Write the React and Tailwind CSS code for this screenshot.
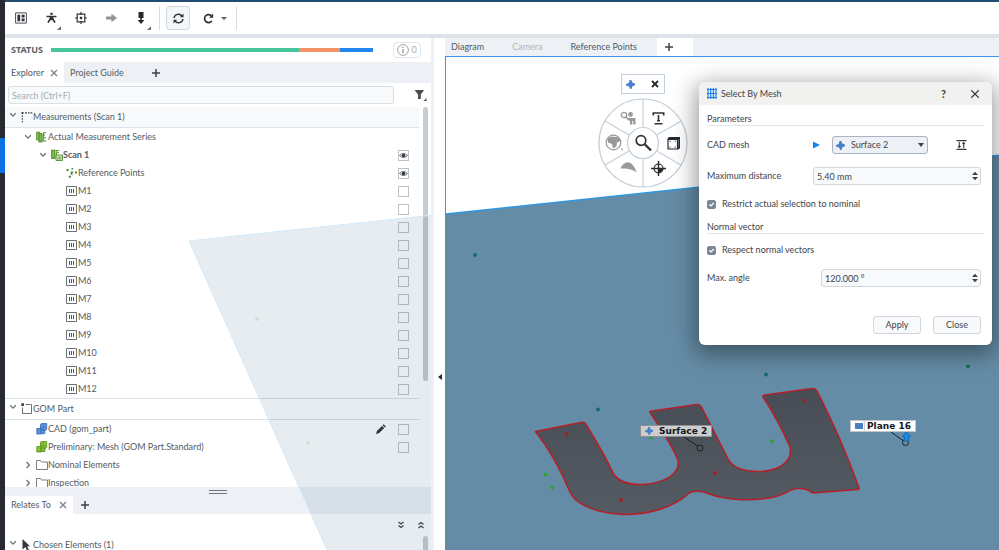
import React, { useState } from "react";

const measurements = [
  "M1", "M2", "M3", "M4", "M5", "M6",
  "M7", "M8", "M9", "M10", "M11", "M12",
];

const indents = ["pl-1", "pl-[19px]", "pl-[34px]", "pl-[49px]"];

/* ---------- small icons ---------- */

const Chevron = ({ open }) => (
  <svg width="8" height="8" viewBox="0 0 8 8" fill="none" stroke="#6b737b" strokeWidth="1.3">
    {open ? <path d="M1.2 2.3 4 5.1 6.8 2.3" /> : <path d="M2.6 1 5.4 4 2.6 7" />}
  </svg>
);

const CloseIcon = ({ size = 8, color = "#7b858e", weight = 1.4 }) => (
  <svg width={size} height={size} viewBox="0 0 8 8" fill="none" stroke={color} strokeWidth={weight}>
    <path d="M1 1l6 6M7 1L1 7" />
  </svg>
);

const PlusIcon = () => (
  <svg width="8" height="8" viewBox="0 0 8 8" stroke="#3c4146" strokeWidth="1.5">
    <path d="M4 0v8M0 4h8" />
  </svg>
);

const SurfaceIcon = ({ size = 9 }) => (
  <svg width={size} height={size} viewBox="0 0 10 10">
    <path d="M4 0h2l.8 2.6L10 4.2v1.6L7.2 7 6 10H4.6L3.4 7.2 0 6V4.4l3-1z" fill="#4a7fcb" />
    <path d="M3.4 3.2h3.2v3.4H3.4z" fill="#4a7fcb" />
  </svg>
);

const Cubes = ({ fill, dark }) => (
  <svg width="12" height="12" viewBox="0 0 12 12" fill={fill} stroke={dark} strokeWidth=".8">
    <path d="M4.5 1.2 5.7.5h5v6L9.5 7.4h-5z" />
    <path d="M.8 5.5h4.4V11H.8z" />
    <path d="M5.2 7h3.6v3.6H5.2z" />
    <path d="M4.8 4.5h5M7.5 1.2v5.6" opacity=".5" />
  </svg>
);

const icons = {
  measurements: (
    <svg width="12" height="12" viewBox="0 0 12 12" fill="#3c4146">
      <path d="M.5 1h2v2h-2zM4 1.2h2v1.2H4zM7 1.2h1.6v1.2H7zM9.6 1.2h1.6v1.2H9.6zM.8 4.4H2V6H.8zM.8 7.2H2v1.6H.8zM.8 10H2v1.2H.8z" />
    </svg>
  ),
  series: (
    <svg width="12" height="12" viewBox="0 0 12 12">
      <path d="M.5 1h3v8h-3z" fill="#8cc152" stroke="#4c8a2b" strokeWidth=".7" />
      <path d="M2.8 2.5h3.4V11H2.8z" fill="#79b83b" stroke="#3f7a24" strokeWidth=".7" />
      <path d="M7.4 1.7H10M7.4 4.2h1.8M7.4 6.8H10M7.4 10h3M7.6 1.5v9" stroke="#4c8a2b" strokeWidth=".9" />
    </svg>
  ),
  scan: (
    <svg width="12" height="12" viewBox="0 0 12 12">
      <path d="M.5 1h3.6v8.5H.5z" fill="#79b83b" stroke="#3f7a24" strokeWidth=".7" />
      <path d="M5.6 1.5h2.6M5.6 3.7H8M5.6 1v5" stroke="#4c8a2b" strokeWidth=".9" />
      <path d="M5 6h6.5v5.5H5z" fill="#d8e6cb" stroke="#4c8a2b" strokeWidth=".9" />
      <path d="M7 7.5v3M8.4 7.5v3M9.8 7.5v3" stroke="#4c8a2b" strokeWidth=".7" />
    </svg>
  ),
  points: (
    <svg width="12" height="12" viewBox="0 0 12 12" fill="#3f8a33">
      <path d="M.5 2h2v2h-2zM5.5 1h1.6v1.6H5.5zM9 4.6h2v2H9zM2.8 8.8h2v2h-2zM4.8 4.6h2.6v1H6.6v2.2H4.8z" />
    </svg>
  ),
  frame: (
    <svg width="11" height="12" viewBox="0 0 11 12" fill="none" stroke="#6b7177">
      <path d="M.5 1.5h10v9H.5z" />
      <path d="M3.5 4v4M5.5 4v4M7.5 4v4" stroke="#50565c" />
    </svg>
  ),
  part: (
    <svg width="12" height="12" viewBox="0 0 12 12" fill="none" stroke="#6b7177">
      <path d="M4.5 1.5h6v9h-9v-6" />
      <path d="M.3.3h2.6v2.6H.3z" fill="#2e3338" stroke="none" />
    </svg>
  ),
  cad: <Cubes fill="#5a93dc" dark="#3568b3" />,
  mesh: <Cubes fill="#86c232" dark="#4f8a1b" />,
  folder: (
    <svg width="12" height="12" viewBox="0 0 12 12" fill="none" stroke="#7a8086">
      <path d="M.5 1.5h4l1 1.5h6v7.5H.5z" />
    </svg>
  ),
  cursor: (
    <svg width="12" height="12" viewBox="0 0 12 12" fill="#34383c">
      <path d="M1.5 0l7.5 7.2H6.2l1.7 3.7-1.8.8-1.6-3.6-3 2.4z" />
    </svg>
  ),
};

/* ---------- toolbar ---------- */

const ToolButton = ({ label, corner, active, className = "", children }) => (
  <button
    aria-label={label}
    className={`relative flex h-6 w-6 items-center justify-center rounded-sm ${
      active ? "border border-[#cfd6de] bg-[#f3f6f9]" : ""
    } ${className}`}
  >
    {children}
    {corner && (
      <svg className="absolute right-0.5 bottom-0" width="4" height="4" viewBox="0 0 4 4">
        <path d="M4 0v4H0z" fill="#6b7177" />
      </svg>
    )}
  </button>
);

const Toolbar = () => (
  <header className="flex h-[38px] shrink-0 items-center border-t-2 border-b-4 border-t-[#1f4c70] border-b-[#dde3e9] bg-white pl-1">
    <ToolButton label="Layout">
      <svg width="12" height="12" viewBox="0 0 12 12">
        <path d="M.6.9h10.8v10.2H.6z" fill="none" stroke="#4a4f54" />
        <path d="M2.4 2.8h2.8v6.4H2.4zM6.6 2.8h3v2.6h-3zM6.6 6.6h3v2.6h-3z" fill="#303439" />
      </svg>
    </ToolButton>
    <ToolButton label="Alignment" corner className="ml-1.5">
      <svg width="11" height="12" viewBox="0 0 11 12" fill="none" stroke="#303439" strokeWidth="1.7">
        <path d="M.5 4.5h10M5.5 4.5 2 10.6M5.5 4.5 9 10.6M3 7.5h5" />
        <path d="M5.5.8v2" strokeWidth="2.4" />
      </svg>
    </ToolButton>
    <ToolButton label="Center view" className="ml-1.5">
      <svg width="12" height="12" viewBox="0 0 12 12" fill="none" stroke="#303439" strokeWidth="1.2">
        <path d="M2.2 2.2h7.6v7.6H2.2z" />
        <path d="M6 0v3M6 9v3M0 6h3M9 6h3" />
        <path d="M4.8 4.8h2.4v2.4H4.8z" fill="#303439" stroke="none" />
      </svg>
    </ToolButton>
    <ToolButton label="Next" className="ml-1.5">
      <svg width="11" height="10" viewBox="0 0 11 10" fill="#909498">
        <path d="M0 3.6h5.4V.8L11 5 5.4 9.2V6.4H0z" />
      </svg>
    </ToolButton>
    <ToolButton label="Probe" corner className="ml-1.5">
      <svg width="8" height="12" viewBox="0 0 8 12" fill="#26292d">
        <path d="M1.5 0h5v6h-5zM3.2 6h1.6v2h2.6L4 12 .6 8h2.6z" />
      </svg>
    </ToolButton>
    <span className="ml-1.5 h-6 w-px bg-[#d5dbe1]" />
    <ToolButton label="Recalculate" active className="ml-1.5">
      <svg width="11" height="11" viewBox="0 0 11 11" fill="none" stroke="#303439" strokeWidth="1.5">
        <path d="M1 5A4.4 4.4 0 0 1 9 3.2M10 6a4.4 4.4 0 0 1-8 1.8" />
        <path d="M10.5.4v3.8H6.8zM.5 10.6V6.8h3.7z" fill="#303439" stroke="none" />
      </svg>
    </ToolButton>
    <ToolButton label="Redo" className="ml-1.5">
      <svg width="11" height="11" viewBox="0 0 11 11" fill="none" stroke="#303439" strokeWidth="1.7">
        <path d="M8.8 8A4 4 0 1 1 8.2 2.6" />
        <path d="M10.2.6v4.2H6z" fill="#303439" stroke="none" />
      </svg>
    </ToolButton>
    <button aria-label="Redo options" className="flex h-6 w-2 items-center justify-center">
      <svg width="6" height="3" viewBox="0 0 6 3">
        <path d="M0 0h6L3 3z" fill="#565c62" />
      </svg>
    </button>
    <span className="ml-2 h-6 w-px bg-[#d5dbe1]" />
  </header>
);

/* ---------- explorer ---------- */

const VisibilityBox = ({ name, visible }) => {
  const [on, setOn] = useState(Boolean(visible));
  return (
    <label className="relative flex h-[11px] w-[11px]">
      <input
        type="checkbox"
        aria-label={`Show ${name}`}
        checked={on}
        onChange={() => setOn(!on)}
        className="h-[11px] w-[11px] appearance-none border border-[#bcc3c9] bg-transparent"
      />
      {on && (
        <svg className="absolute left-0 top-0" width="11" height="11" viewBox="0 0 11 11">
          <path d="M1.5 5.5Q5.5 1.5 9.5 5.5Q5.5 9.5 1.5 5.5z" fill="none" stroke="#50555a" strokeWidth=".9" />
          <circle cx="5.5" cy="5.5" r="1.7" fill="#303439" />
        </svg>
      )}
    </label>
  );
};

const TreeRow = ({ level, icon, name, open, bold, edit, box, visible }) => (
  <li className={`flex h-[18px] items-center pr-2.5 ${indents[level]}`}>
    <span className="mr-1 w-2">{open !== undefined && <Chevron open={open} />}</span>
    <span className="w-3">{icons[icon]}</span>
    <span className={`flex-1 whitespace-nowrap ${bold ? "font-bold" : ""}`}>{name}</span>
    {edit && (
      <svg className="mr-3" width="10" height="10" viewBox="0 0 10 10" fill="#303439">
        <path d="M7.6.3 9.8 2.4 8.8 3.5 6.6 1.3zM6 1.9l2.2 2.2-5 5L0 10l.9-3z" />
      </svg>
    )}
    {box && <VisibilityBox name={name} visible={visible} />}
  </li>
);

const TreeHeading = ({ icon, name, className }) => (
  <h2 className={`flex items-center border-b border-[#dbe2e9] pl-1 ${className}`}>
    <span className="mr-1 w-2 pb-1"><Chevron open /></span>
    <span className="w-3">{icons[icon]}</span>
    {name}
  </h2>
);

const StatusBar = () => (
  <div className="flex h-6 shrink-0 items-center bg-white pr-2.5 pl-1.5">
    <span className="w-10 font-['Noto_Sans',sans-serif] text-[9px] font-bold text-[#5a6168]">STATUS</span>
    <div className="mr-5 flex h-1 flex-1">
      <span className="flex-60 bg-[#48c79c]" />
      <span className="flex-10 bg-[#f39367]" />
      <span className="flex-8 bg-[#2385ee]" />
    </div>
    <button className="flex h-4 w-7 items-center justify-center gap-0.5 rounded-sm border border-[#e3e6e9] text-[#a9adb1]">
      <svg width="12" height="12" viewBox="0 0 12 12" fill="none" stroke="#85898d">
        <circle cx="6" cy="6" r="5.4" strokeWidth=".8" />
        <path d="M6 5v4M6 2.8v1.2" strokeWidth="1.2" />
      </svg>
      0
    </button>
  </div>
);

const Explorer = () => (
  <aside className="relative flex w-[429px] shrink-0 flex-col overflow-hidden border-r-3 border-[#edf1f5] bg-white">
    <StatusBar />
    <nav className="flex h-[21px] shrink-0 items-center bg-[#edf1f5]">
      <button className="flex h-full items-center gap-1.5 bg-white pr-1.5 pl-1.5">
        Explorer <CloseIcon />
      </button>
      <button className="h-full pl-1.5">Project Guide</button>
      <button aria-label="Add tab" className="ml-7"><PlusIcon /></button>
    </nav>

    <div className="flex h-6 shrink-0 items-center pr-1 pl-[3px]">
      <input
        type="search"
        aria-label="Search"
        placeholder="Search (Ctrl+F)"
        className="h-[18px] flex-1 rounded-[3px] border border-[#d9dfe5] bg-[#f7f9fb] px-[3px] outline-none placeholder:text-[#a7adb3]"
      />
      <button aria-label="Filter" className="ml-5">
        <svg width="13" height="12" viewBox="0 0 13 12" fill="#4a4f54">
          <path d="M.5 1h9.6L6.8 5.4V10H4V5.4zM12.5 9v3h-3z" />
        </svg>
      </button>
    </div>

    <div className="flex min-h-0 flex-1 overflow-hidden">
      <div className="min-w-0 flex-1">
        <TreeHeading icon="measurements" name="Measurements (Scan 1)" className="h-[21px] bg-[#f7f9fb]" />
        <ul>
          <TreeRow level={1} icon="series" name="Actual Measurement Series" open />
          <TreeRow level={2} icon="scan" name="Scan 1" open bold box visible />
          <TreeRow level={3} icon="points" name="Reference Points" box visible />
          {measurements.map((m) => (
            <TreeRow key={m} level={3} icon="frame" name={m} box />
          ))}
        </ul>
        <TreeHeading icon="part" name="GOM Part" className="h-[22px] border-t" />
        <ul>
          <TreeRow level={1} icon="cad" name="CAD (gom_part)" edit box />
          <TreeRow level={1} icon="mesh" name="Preliminary: Mesh (GOM Part.Standard)" box />
          <TreeRow level={1} icon="folder" name="Nominal Elements" open={false} />
          <TreeRow level={1} icon="folder" name="Inspection" open={false} />
        </ul>
      </div>
      <div className="w-3 pl-1">
        <div className="h-[72%] w-[5px] rounded-full bg-[#c6ccd3]" />
      </div>
    </div>

    <div className="h-[63px] shrink-0 overflow-hidden">
      <div className="flex h-[9px] items-center justify-center bg-[#edf1f5]">
        <span className="h-1 w-[18px] border-y border-[#6f767d]" />
      </div>
      <nav className="flex h-[18px] items-center bg-[#edf1f5]">
        <button className="flex h-full items-center gap-2 bg-white pr-1.5 pl-1.5">
          Relates To <CloseIcon />
        </button>
        <button aria-label="Add panel" className="ml-2"><PlusIcon /></button>
      </nav>
      <div className="flex">
        <div className="flex-1">
          <div className="flex h-[22px] items-center justify-end gap-3">
            <button aria-label="Expand all">
              <svg width="8" height="8" viewBox="0 0 8 8" fill="none" stroke="#3c4146" strokeWidth="1.2">
                <path d="M1.5 1 4 3l2.5-2M1.5 4.5l2.5 2 2.5-2" />
              </svg>
            </button>
            <button aria-label="Collapse all" className="-mr-1.5">
              <svg width="8" height="8" viewBox="0 0 8 8" fill="none" stroke="#3c4146" strokeWidth="1.2">
                <path d="M1.5 3.5 4 1.5l2.5 2M1.5 7 4 5l2.5 2" />
              </svg>
            </button>
          </div>
          <TreeHeading icon="cursor" name="Chosen Elements (1)" className="h-[18px]" />
        </div>
        <div className="w-3 pt-[22px] pl-1">
          <div className="h-10 w-[5px] rounded-full bg-[#c6ccd3]" />
        </div>
      </div>
    </div>

    {/* Faded continuation of the scene plane behind the panel */}
    <svg
      className="pointer-events-none absolute inset-0 -mr-[3px] h-full w-[429px]"
      viewBox="5 38 429 512"
      preserveAspectRatio="xMinYMin slice"
    >
      <path d="M189 241 434 215V550H327z" fill="#195478" fillOpacity=".11" />
      <path d="M434 215 189 241 327 550" fill="none" stroke="#d3eafa" strokeWidth="1" />
      <circle cx="257" cy="319" r="2" fill="#d3e0e0" />
      <circle cx="308" cy="443" r="2" fill="#d3e0e0" />
    </svg>
  </aside>
);

/* ---------- 3D view ---------- */

const dots = [
  [475, 255, "#1d6b68"], [598, 409.5, "#1d6b68"], [766, 374.5, "#1d6b68"], [968, 366.5, "#1d6b58"],
  [545.5, 474.5, "#2da336"], [552.5, 487.5, "#2da336"], [772, 441.5, "#2da336"], [651, 437.5, "#2da336"],
  [566.5, 434, "#a02025"], [621, 500, "#a02025"], [715, 473, "#a02025"], [804.5, 400.5, "#a02025"],
];

const letterOutline = [
  "M535.5 431.5L582 422.3Q585 421.8 587 426",
  "C598 444 607 460 613 473C618 482 629 484.5 641 484.5",
  "C663 484 681 474 678 460C673 448 662 430 650 412.5",
  "Q649 411 652 411L697 404.5Q700 404 702 408",
  "L727 457C731 467 743 471.5 759 471.5C780 471 793 461 790 447",
  "C783 431 773 412 763 397Q762 395.5 765 395",
  "L812 388.5Q815 388 817 391C834 424 848 457 859 488",
  "Q859 489.5 857 489.5L813 493C808 490 806 488.5 798 488.5",
  "C790 488.5 787 494 776 496.5C757 501.5 727 501 708 493.5",
  "C701 490.5 692 490.5 688 494C672 509 645 514.5 624 514.5",
  "C596 513.5 575 504 570 492C560 468 547 446 535.5 431.5z",
].join("");

const Scene = () => (
  <svg className="block h-full w-full" viewBox="446 57 553 493" preserveAspectRatio="xMinYMin slice">
    <defs>
      <linearGradient id="mesh" x1="0" y1="0" x2="0" y2="1">
        <stop offset="0" stopColor="#484d55" />
        <stop offset="1" stopColor="#555b63" />
      </linearGradient>
    </defs>
    <path d="M446 214 1999 49V1550H446z" fill="#658ca6" />
    <path d="M446 214 1999 49" stroke="#2f97e0" strokeWidth="1.5" />
    <path d={letterOutline} fill="url(#mesh)" stroke="#b3202a" strokeWidth="1.6" strokeLinejoin="round" />
    {dots.map(([x, y, color]) => (
      <circle key={`${x}-${y}`} cx={x} cy={y} r="2" fill={color} />
    ))}
    <g fill="none" stroke="#1b1f23">
      <path d="M684 437 697.5 446" />
      <circle cx="700" cy="448" r="3" />
      <path d="M891 432 903 440.5" />
      <circle cx="905.5" cy="442.5" r="3" />
    </g>
    <path d="M906.5 431.5 910.5 436.5H908.8V441H904.2V436.5H902.5z" fill="#1689e8" stroke="#0c5fa8" strokeWidth=".7" />
  </svg>
);

const WheelButton = ({ label, className, children }) => (
  <button aria-label={label} className={`absolute flex h-5 w-5 items-center justify-center ${className}`}>
    {children}
  </button>
);

const ToolWheel = () => (
  <div className="absolute top-[17px] left-[152px] flex flex-col items-center">
    <div className="mb-1 flex h-5 w-11 items-center justify-between border border-[#c3cfda] bg-white px-1">
      <SurfaceIcon />
      <button aria-label="Close tool wheel" className="mr-px"><CloseIcon color="#26292d" weight={1.8} /></button>
    </div>
    <div className="relative h-[90px] w-[90px]">
      <svg width="90" height="90" viewBox="0 0 90 90" fill="#fff" stroke="#c3cfda" strokeWidth="1.2">
        <circle cx="45" cy="45" r="44" />
        <path d="M45 1v29M45 60v29M7 23l25 14.5M58 52.5 83 67M7 67l25-14.5M58 37.5 83 23" />
        <circle cx="45" cy="45" r="15.5" />
      </svg>
      <WheelButton label="Find element" className="left-5 top-2.5">
        <svg width="16" height="14" viewBox="0 0 16 14" fill="#97999b">
          <circle cx="4" cy="4" r="2.7" fill="none" stroke="#97999b" strokeWidth="1.3" />
          <path d="M5.5 5.5 9 9" stroke="#97999b" strokeWidth="1.6" />
          <circle cx="10.5" cy="3.5" r="2.4" />
          <path d="M7 7h8.5v6.5h-2.2V10h-1v3.5H10V10.5z" />
        </svg>
      </WheelButton>
      <WheelButton label="Label" className="left-[50px] top-2.5">
        <svg width="13" height="14" viewBox="0 0 13 14" fill="none" stroke="#303439" strokeWidth="1.6">
          <path d="M1.3 4.5V2h10.4v2.5M6.5 4v6M2.5 12.8h8M5 9.8h3" />
        </svg>
      </WheelButton>
      <WheelButton label="Globe" className="left-1.5 top-[35px]">
        <svg width="18" height="18" viewBox="0 0 18 18" fill="#97999b">
          <circle cx="8.5" cy="8.5" r="7.3" fill="none" stroke="#97999b" strokeWidth="1.2" />
          <path d="M2.5 4.5 7 2.5l7 1 1.5 3.5-3.5 1.5-.5 4-3.5 2-1-4.5L3 8.5zM15.5 14.5h2.2v2.5z" />
        </svg>
      </WheelButton>
      <WheelButton label="Zoom" className="left-[35px] top-[35px]">
        <svg width="18" height="18" viewBox="0 0 18 18" fill="none" stroke="#303439">
          <circle cx="7" cy="6.5" r="4.8" strokeWidth="1.7" />
          <path d="M10.5 10 17 16.5" strokeWidth="2.4" />
        </svg>
      </WheelButton>
      <WheelButton label="Section box" className="left-[65px] top-[35px]">
        <svg width="13" height="13" viewBox="0 0 13 13" fill="none" stroke="#26292d">
          <path d="M1 2.5h9.5V12H1z" strokeWidth="1.2" />
          <path d="M1 2 2.5 1h9.7v9.5L11 12" strokeWidth="1.8" />
          <path d="M2.8 5v-.8h1M7.5 4.2h1V5M2.8 9.5v.8h1M7.5 10.3h1v-.8" strokeWidth=".6" />
        </svg>
      </WheelButton>
      <WheelButton label="Surface curve" className="left-5 top-[59px]">
        <svg width="17" height="12" viewBox="0 0 17 12" fill="#97999b">
          <path d="M.5 7.5C4-1.5 13-1.5 16.5 11.5 13 8 6 7 .5 7.5z" />
        </svg>
      </WheelButton>
      <WheelButton label="Set center" className="left-[50px] top-[60px]">
        <svg width="15" height="15" viewBox="0 0 15 15" fill="none" stroke="#26292d">
          <circle cx="7.5" cy="7.5" r="4.5" strokeWidth="1.1" />
          <path d="M7.5 0v15M0 7.5h15" strokeWidth="1.4" />
          <path d="M7.5 7.5H12a4.5 4.5 0 0 1-4.5 4.5z" fill="#26292d" stroke="none" />
        </svg>
      </WheelButton>
    </div>
  </div>
);

const View = () => (
  <section className="flex min-w-0 flex-1 flex-col">
    <nav className="flex h-[18px] shrink-0 items-center bg-[#edf0f5]">
      <button className="pl-1.5">Diagram</button>
      <button className="ml-7 text-[#b1b5ba]">Camera</button>
      <button className="ml-7">Reference Points</button>
      <button aria-label="Add view" className="ml-5 flex h-full w-9 items-center justify-center bg-white pr-3">
        <PlusIcon />
      </button>
    </nav>
    <div className="relative min-h-0 flex-1 overflow-hidden border-t border-l border-[#3d93ea] bg-white">
      <Scene />
      <ToolWheel />
      <div className="absolute top-[368px] left-[194px] flex h-3 items-center gap-1.5 border border-[#8d9195] bg-[#cdcdce] pr-1 pl-1 font-['DejaVu_Sans',sans-serif] text-[9px] font-bold text-[#14171a]">
        <SurfaceIcon size={8} />
        Surface 2
      </div>
      <div className="absolute top-[363px] left-[404px] flex h-3 items-center border border-[#c2c6ca] bg-white pr-1 font-['DejaVu_Sans',sans-serif] text-[9px] font-bold text-[#14171a]">
        <span className="mr-0.5 flex h-full w-3.5 items-center justify-end border-r border-[#d0d3d6] pr-px">
          <span className="h-1.5 w-2 bg-[#4a7fcb]" />
        </span>
        Plane 16
      </div>
    </div>
  </section>
);

/* ---------- dialog ---------- */

const SectionTitle = ({ children }) => (
  <h3 className="h-[13px] border-b border-[#dfe4e8] leading-3">{children}</h3>
);

const SpinBox = ({ id, value, className }) => {
  const [text, setText] = useState(value);
  return (
    <div className={`relative mr-[3px] ${className}`}>
      <input
        id={id}
        type="text"
        value={text}
        onChange={(e) => setText(e.target.value)}
        className="block h-[18px] w-full rounded-[3px] border border-[#cfd6dd] bg-[#f7f9fb] px-[3px] outline-none"
      />
      <svg className="pointer-events-none absolute right-[3px] top-1" width="6" height="10" viewBox="0 0 6 10" fill="#3c4146">
        <path d="M0 4h6L3 .8zM0 6h6L3 9.2z" />
      </svg>
    </div>
  );
};

const Check = ({ children }) => {
  const [on, setOn] = useState(true);
  return (
    <label className="relative flex h-3 items-center gap-1.5">
      <input
        type="checkbox"
        checked={on}
        onChange={() => setOn(!on)}
        className="h-[9px] w-[9px] appearance-none rounded-xs border border-[#7b8794] checked:bg-[#7b8794]"
      />
      {on && (
        <svg className="pointer-events-none absolute left-0" width="9" height="9" viewBox="0 0 9 9" fill="none" stroke="#fff" strokeWidth="1.2">
          <path d="M2.3 4.3 4 6l2.8-3" />
        </svg>
      )}
      {children}
    </label>
  );
};

const SelectByMeshDialog = () => (
  <div
    role="dialog"
    aria-label="Select By Mesh"
    className="absolute top-11 right-[7px] w-[293px] overflow-hidden rounded-md bg-white text-[#3e444a] shadow-[0_6px_22px_4px_rgba(0,0,0,0.38)]"
  >
    <div className="flex h-[23px] items-center bg-[#f1f1ef] pr-3 pl-2">
      <svg width="10" height="11" viewBox="0 0 10 11" fill="none" stroke="#1d7ff0" strokeWidth="1.2">
        <path d="M1 0v11M3.7 0v11M6.4 0v11M9 0v11M0 1.5h10M0 5.5h10M0 9.5h10" />
      </svg>
      <span className="ml-1 flex-1">Select By Mesh</span>
      <button aria-label="Help" className="mr-6 text-[11px] font-bold">?</button>
      <button aria-label="Close dialog"><CloseIcon size={10} color="#34383c" weight={0.9} /></button>
    </div>
    <div className="px-2 pt-2 pb-[11px]">
      <SectionTitle>Parameters</SectionTitle>
      <div className="mt-[10px] flex h-[18px] items-center">
        <label htmlFor="cad-mesh" className="flex-1">CAD mesh</label>
        <svg width="7" height="8" viewBox="0 0 7 8" fill="#1480f5">
          <path d="M0 .5v7L7 4z" />
        </svg>
        <div className="relative ml-3 flex w-24 items-center">
          <select
            id="cad-mesh"
            className="h-[18px] w-full appearance-none rounded-[3px] border border-[#a9b4bf] bg-[#edf1f5] pl-[18px] outline-none"
          >
            <option>Surface 2</option>
          </select>
          <span className="pointer-events-none absolute left-1"><SurfaceIcon /></span>
          <svg className="pointer-events-none absolute right-1" width="6" height="4" viewBox="0 0 6 4" fill="#3c4146">
            <path d="M0 0h6L3 4z" />
          </svg>
        </div>
        <button aria-label="Limits" className="mr-[17px] ml-7">
          <svg width="11" height="10" viewBox="0 0 11 10" fill="none" stroke="#34383c" strokeWidth="1.1">
            <path d="M.5.6h10M.5 9.4h10M3.3 2v5.5M7.7 8V2.5M2 6l1.3 1.5L4.6 6M6.4 4l1.3-1.5L9 4" />
          </svg>
        </button>
      </div>
      <div className="mt-[13px] flex items-center">
        <label htmlFor="max-distance" className="flex-1">Maximum distance</label>
        <SpinBox id="max-distance" value="5.40 mm" className="w-[168px]" />
      </div>
      <div className="mt-[13px]"><Check>Restrict actual selection to nominal</Check></div>
      <div className="mt-[11px]"><SectionTitle>Normal vector</SectionTitle></div>
      <div className="mt-[10px]"><Check>Respect normal vectors</Check></div>
      <div className="mt-[13px] flex items-center">
        <label htmlFor="max-angle" className="flex-1">Max. angle</label>
        <SpinBox id="max-angle" value="120.000 °" className="w-40" />
      </div>
      <div className="mt-[29px] mr-[3px] flex justify-end gap-3">
        <button className="h-[18px] w-12 rounded-[3px] border border-[#cfd6dd] bg-[#f7f9fb]">Apply</button>
        <button className="h-[18px] w-12 rounded-[3px] border border-[#cfd6dd] bg-[#f7f9fb]">Close</button>
      </div>
    </div>
  </div>
);

const App = () => {
  return (
    <div className="flex h-screen w-full overflow-hidden bg-white font-['Lato','Noto_Sans',sans-serif] text-[9px] leading-3 text-[#545b62]">
      {/* Edge of the outer dock */}
      <div className="w-[5px] shrink-0 bg-[#272b31] pt-[138px]">
        <div className="h-[35px] bg-[#0b72e7]" />
      </div>
      <div className="flex min-w-0 flex-1 flex-col">
        <Toolbar />
        <main className="relative flex min-h-0 flex-1">
          <Explorer />
          <button aria-label="Collapse explorer" className="flex w-[11px] shrink-0 items-center justify-center pt-[166px]">
            <svg width="4" height="6" viewBox="0 0 4 6">
              <path d="M4 0v6L0 3z" fill="#26292d" />
            </svg>
          </button>
          <View />
          <SelectByMeshDialog />
        </main>
      </div>
    </div>
  );
};

export default App;
